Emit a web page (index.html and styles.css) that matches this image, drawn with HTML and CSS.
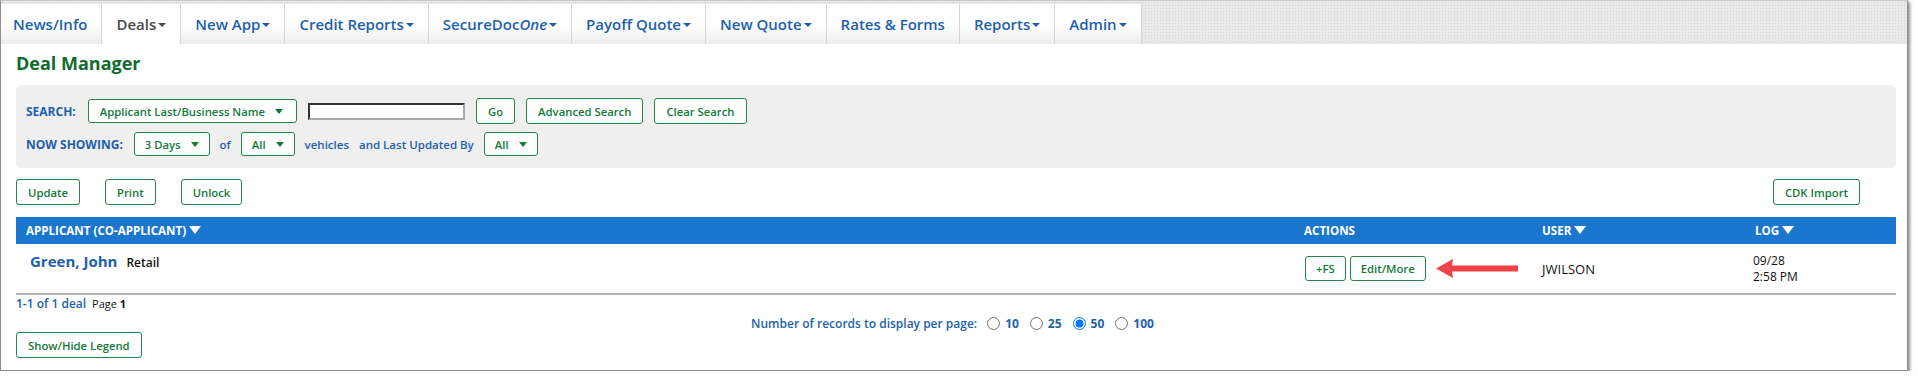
FILE: index.html
```html
<!DOCTYPE html>
<html lang="en">
<head>
  <meta charset="UTF-8">
  <title>Deal Manager</title>
  <link rel="stylesheet" href="styles.css">
</head>
<body>
  <div class="frame">

    <!-- top navigation -->
    <ul class="tabs">
      <li class="tab">News/Info</li>
      <li class="tab active">Deals<span class="caret"></span></li>
      <li class="tab">New App<span class="caret"></span></li>
      <li class="tab">Credit Reports<span class="caret"></span></li>
      <li class="tab">SecureDoc<i>One</i><span class="caret"></span></li>
      <li class="tab">Payoff Quote<span class="caret"></span></li>
      <li class="tab">New Quote<span class="caret"></span></li>
      <li class="tab">Rates &amp; Forms</li>
      <li class="tab">Reports<span class="caret"></span></li>
      <li class="tab">Admin<span class="caret"></span></li>
    </ul>

    <div class="page">
      <h1>Deal Manager</h1>

      <!-- search -->
      <div class="search-box">
        <div class="search-row">
          <span class="label">SEARCH:</span>
          <span class="select wide">Applicant Last/Business Name<span class="caret"></span></span>
          <input type="text" class="search-input">
          <button class="btn">Go</button>
          <button class="btn">Advanced Search</button>
          <button class="btn">Clear Search</button>
        </div>
        <div class="search-row">
          <span class="label">NOW SHOWING:</span>
          <span class="select">3 Days<span class="caret"></span></span>
          <span class="label">of</span>
          <span class="select">All<span class="caret"></span></span>
          <span class="label">vehicles</span>
          <span class="label">and Last Updated By</span>
          <span class="select">All<span class="caret"></span></span>
        </div>
      </div>

      <div class="toolbar">
        <button class="btn">Update</button>
        <button class="btn">Print</button>
        <button class="btn">Unlock</button>
        <button class="btn push-right">CDK Import</button>
      </div>

      <!-- deals list -->
      <table class="deals">
        <colgroup>
          <col class="c-app">
          <col class="c-act">
          <col class="c-user">
          <col class="c-log">
        </colgroup>
        <thead>
          <tr>
            <th>APPLICANT (CO-APPLICANT)<span class="sort"></span></th>
            <th>ACTIONS</th>
            <th>USER<span class="sort"></span></th>
            <th>LOG<span class="sort"></span></th>
          </tr>
        </thead>
        <tbody>
          <tr>
            <td class="name-cell"><span class="name">Green, John</span><span class="deal-type">Retail</span></td>
            <td>
              <div class="actions">
                <button class="btn">+FS</button>
                <button class="btn">Edit/More</button>
                <svg class="pointer" width="82" height="19" viewBox="0 0 82 19">
                  <polygon points="0,9.5 17,0 16,6.5 82,6.5 82,12.5 16,12.5 17,19" fill="#ef4347"/>
                </svg>
              </div>
            </td>
            <td class="user">JWILSON</td>
            <td class="log">09/28<br>2:58 PM</td>
          </tr>
        </tbody>
      </table>

      <div class="pager"><span class="count">1-1 of 1 deal</span> Page <b>1</b></div>

      <div class="per-page">
        <span class="label">Number of records to display per page:</span>
        <label><input type="radio" name="pp">10</label>
        <label><input type="radio" name="pp">25</label>
        <label><input type="radio" name="pp" checked>50</label>
        <label><input type="radio" name="pp">100</label>
      </div>

      <button class="btn">Show/Hide Legend</button>
    </div>

  </div>
</body>
</html>
```

FILE: styles.css
```css
/* base */
body {
  margin: 0;
  font-family: "Open Sans", "Liberation Sans", sans-serif;
  background: #fff;
}

.frame {
  width: 1908px;
  box-sizing: border-box;
  border: 1px solid #8e8e8e;
  border-top-color: #c8c8c8;
  box-shadow: 2px 2px 3px rgba(0,0,0,0.45);
  background: #fff;
}

/* tabs */
.tabs {
  display: flex;
  margin: 0;
  padding: 3px 0 0 0;
  list-style: none;
  height: 40px;
  background-color: #e9e9e9;
  background-image: radial-gradient(#d2d2d2 0.7px, transparent 0.8px);
  background-size: 3px 3px;
}
.tab {
  display: flex;
  align-items: center;
  padding: 0 14px;
  font-size: 15px;
  font-weight: 600;
  color: #1d5fae;
  background: linear-gradient(#fff 55%, #ececec);
  border-right: 1px solid #d6d6d6;
}
.tab:first-child {
  padding-left: 12px;
}
.tab i {
  font-weight: 600;
}
.tab.active {
  background: #fff;
  color: #4a4a4a;
}
.caret {
  display: inline-block;
  width: 0;
  height: 0;
  margin-left: 2px;
  margin-top: 2px;
  border-left: 4px solid transparent;
  border-right: 4px solid transparent;
  border-top: 4px solid currentColor;
}

/* page */
.page {
  padding: 0 11px 12px 15px;
}
h1 {
  margin: 7px 0 10px 0;
  font-size: 18px;
  line-height: 24px;
  font-weight: 700;
  color: #0f6a2e;
}

.search-box {
  background: #efefef;
  border-radius: 6px;
  padding: 13px 10px 12px 10px;
}
.search-row {
  display: flex;
  align-items: center;
  gap: 11px;
}
.search-row + .search-row {
  margin-top: 8px;
  gap: 10px;
}
.search-row + .search-row .label {
  font-size: 11.5px;
}
.label {
  font-size: 12px;
  font-weight: 600;
  color: #1d5fae;
}
.search-row .label:first-child {
  font-size: 12px;
  font-weight: 700;
  margin-right: 1px;
}
.select {
  display: inline-flex;
  align-items: center;
  height: 22px;
  padding: 0 10px;
  border: 1px solid #23874a;
  border-radius: 3px;
  background: #fff;
  font-size: 11.3px;
  font-weight: 600;
  color: #137a3a;
}
.select.wide {
  padding-left: 11px;
  padding-right: 13px;
}
.select .caret {
  margin-left: 10px;
  border-left-width: 4px;
  border-right-width: 4px;
  border-top-width: 5px;
  margin-top: 0;
}
.search-input {
  width: 153px;
  height: 13px;
  padding: 0;
  margin: 0;
  border: 2px solid;
  border-color: #333 #a8a8a8 #a8a8a8 #333;
}

/* buttons */
.btn {
  height: 26px;
  padding: 0 11px;
  margin: 0;
  border: 1px solid #23874a;
  border-radius: 3px;
  background: #fff;
  font-family: inherit;
  font-size: 11.3px;
  font-weight: 600;
  color: #137a3a;
  cursor: pointer;
}

.toolbar {
  display: flex;
  gap: 25px;
  margin-top: 11px;
}
.push-right {
  margin-left: auto;
  margin-right: 36px;
}

/* table */
.deals {
  width: 1880px;
  margin-top: 12px;
  border-collapse: collapse;
  table-layout: fixed;
}
.c-app { width: 1278px; }
.c-act { width: 238px; }
.c-user { width: 213px; }
.c-log { width: 151px; }
.deals th {
  height: 27px;
  padding: 0 10px;
  background: #1b76cf;
  color: #fff;
  font-size: 11.6px;
  font-weight: 700;
  text-align: left;
}
.sort {
  display: inline-block;
  width: 0;
  height: 0;
  margin-left: 3px;
  vertical-align: 1px;
  border-left: 6px solid transparent;
  border-right: 6px solid transparent;
  border-top: 8px solid #fff;
}
.deals td {
  height: 49px;
  padding: 0 10px;
  border-bottom: 2px solid #b4b4b4;
  vertical-align: middle;
}
.deals td.name-cell {
  height: 43px;
  vertical-align: top;
  padding-top: 6px;
  padding-left: 14px;
}
.name {
  font-size: 15px;
  font-weight: 700;
  color: #1d5fae;
}
.deal-type {
  margin-left: 9px;
  font-size: 12px;
  font-weight: 600;
  color: #111;
}
.actions {
  display: flex;
  align-items: center;
  gap: 4px;
  padding-left: 1px;
}
.actions .btn {
  height: 25px;
  padding: 0 10px;
}
.pointer {
  margin-left: 6px;
}
.user {
  font-size: 13px;
  color: #111;
}
.log {
  font-size: 12px;
  line-height: 16px;
  color: #111;
  padding-left: 8px !important;
}

/* footer bits */
.pager {
  margin-top: 1px;
  font-size: 11px;
  line-height: 16px;
  color: #111;
}
.pager .count {
  font-size: 12px;
  font-weight: 600;
  color: #1d5fae;
  margin-right: 3px;
}
.per-page {
  display: flex;
  justify-content: center;
  align-items: center;
  margin-top: 3px;
  margin-bottom: 1px;
  height: 16px;
}
.per-page .label {
  margin-right: 6px;
}
.per-page label {
  display: flex;
  align-items: center;
  font-size: 12px;
  font-weight: 700;
  color: #1d5fae;
  margin-right: 7px;
}
.per-page input {
  margin: 0 5px 0 4px;
  width: 13px;
  height: 13px;
}
```
